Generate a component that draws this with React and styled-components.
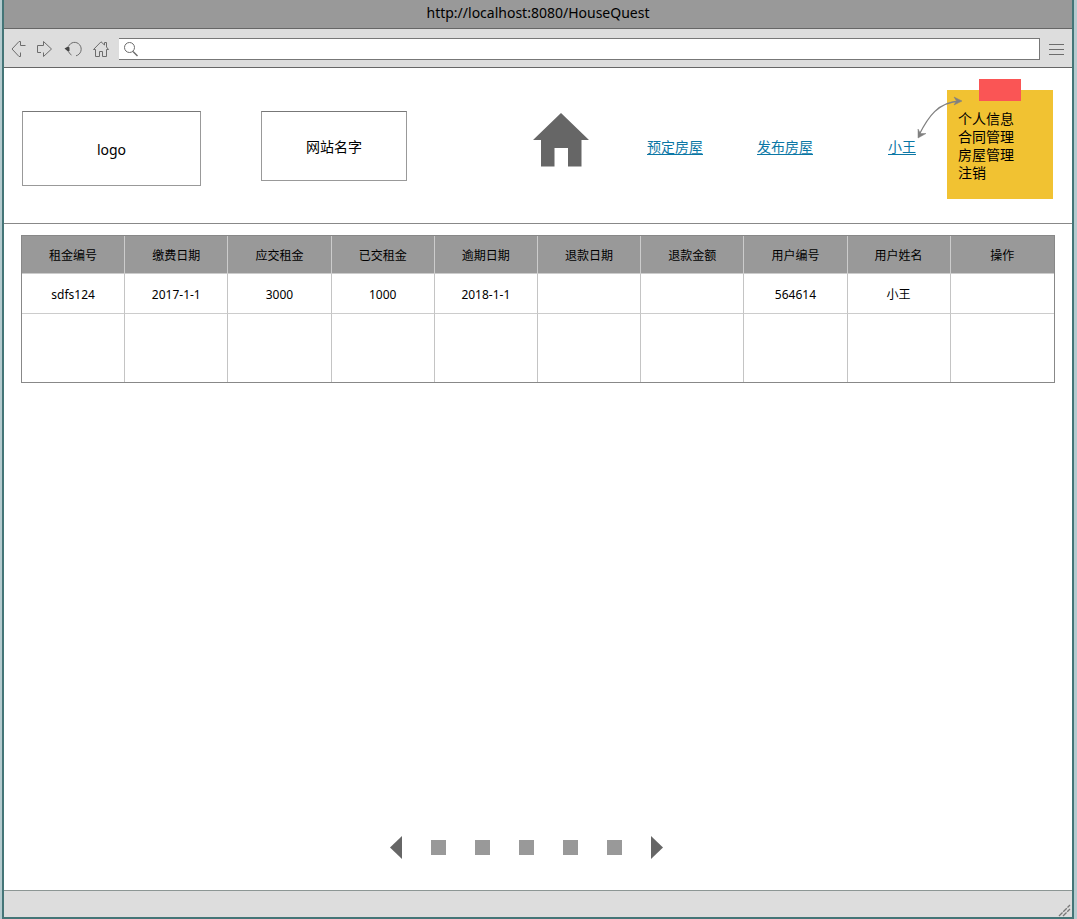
import React from "react";
import styled, { createGlobalStyle } from "styled-components";

const GlobalStyle = createGlobalStyle`
  *, *::before, *::after { box-sizing: border-box; }
  body {
    margin: 0;
    background: #b5cbcf;
    color: #000;
    font: 14px/18px "Noto Sans", "Noto Sans CJK SC", sans-serif;
  }
  button { border: 0; padding: 0; background: none; display: block; cursor: pointer; }
  svg { display: block; }
`;

const BrowserWindow = styled.div`
  display: flex;
  flex-direction: column;
  min-height: 100vh;
  margin: 0 3px 0 2px;
  border: solid #447577;
  border-width: 0 2px 2px;
  background: #fff;
`;

const TitleBar = styled.div`
  height: 29px;
  padding-top: 4px;
  text-align: center;
  background: #999;
  border-bottom: 1px solid #666;
`;

const Toolbar = styled.div`
  display: flex;
  align-items: center;
  height: 39px;
  padding: 2px 8px 0 6px;
  background: #ddd;
  border-bottom: 1px solid #666;
`;

const ToolbarButtons = styled.div`
  display: flex;
  gap: 9px;
  margin-right: 9px;
`;

const AddressBar = styled.label`
  display: flex;
  align-items: center;
  flex: 1;
  height: 22px;
  padding-left: 4px;
  background: #fff;
  border: solid #777;
  border-width: 1px 1px 1px 0;
`;

const AddressInput = styled.input`
  flex: 1;
  min-width: 0;
  margin-left: 6px;
  border: 0;
  outline: 0;
  font: inherit;
  background: transparent;
`;

const MenuButton = styled.button`
  margin-left: 9px;
`;

const Header = styled.header`
  display: flex;
  align-items: center;
  min-height: 156px;
  padding: 0 19px 0 18px;
  border-bottom: 1px solid #888;
`;

const Brand = styled.div`
  display: flex;
  align-items: flex-start;
  gap: 60px;
  padding-top: 6px;
`;

const Placeholder = styled.div`
  display: flex;
  align-items: center;
  justify-content: center;
  width: ${(p) => p.$width}px;
  height: ${(p) => p.$height}px;
  padding-top: 2px;
  border: 1px solid #999;
  border-top-color: #777;
`;

const Nav = styled.nav`
  display: flex;
  align-items: center;
  gap: 54px;
  margin-left: auto;
`;

const HomeLink = styled.a`
  width: 60px;
  padding-bottom: 12px;
`;

const TextLink = styled.a`
  padding-top: 2px;
  color: #0b77a5;
  white-space: nowrap;
  text-decoration: underline;
  text-underline-offset: 2px;
`;

const Account = styled.div`
  display: flex;
  align-items: center;
  gap: 31px;
  margin-left: 75px;
`;

const Note = styled.div`
  position: relative;
  display: flex;
  flex-direction: column;
  width: 106px;
  height: 109px;
  margin-bottom: 2px;
  padding: 20px 11px 0;
  background: #f1c232;
`;

const NoteLink = styled.a`
  color: #000;
  text-decoration: none;
`;

const Tape = styled.span`
  position: absolute;
  top: -11px;
  left: 32px;
  width: 42px;
  height: 22px;
  background: #fa5555;
`;

const Connector = styled.svg`
  position: absolute;
  top: 5px;
  left: -31px;
`;

const Content = styled.main`
  flex: 1;
  padding: 11px 17px;
`;

const Table = styled.table`
  width: 100%;
  table-layout: fixed;
  border-spacing: 0;
  border: 1px solid #888;
  font-size: 12px;
`;

const HeadCell = styled.th`
  height: 38px;
  padding: 2px 0 0;
  font-weight: 400;
  background: #999;
  border-right: 1px solid #ccc;
  border-bottom: 1px solid #ccc;
  &:last-child { border-right: 0; }
`;

const Cell = styled.td`
  height: ${(p) => (p.$last ? 68 : 40)}px;
  padding: 2px 0 0;
  text-align: center;
  border-right: 1px solid #c4c4c4;
  border-bottom: ${(p) => (p.$last ? "0" : "1px solid #ccc")};
  &:last-child { border-right: 0; }
`;

const Pagination = styled.nav`
  display: flex;
  align-items: center;
  justify-content: center;
  gap: 29px;
  padding: 0 23px 31px 0;
`;

const PageButton = styled.button`
  && { background: #999; }
  width: 15px;
  height: 15px;
`;

const StatusBar = styled.footer`
  display: flex;
  align-items: flex-end;
  justify-content: flex-end;
  height: 27px;
  background: #ddd;
  border-top: 1px solid #8c9694;
`;

const lineIcon = { fill: "none", stroke: "#6c6c6c", strokeWidth: 1 };

const BackIcon = () => (
  <svg width="17" height="18" viewBox="0 0 17 18" {...lineIcon}>
    <path d="M15.5 5.5H10.5V1.5H9L2 9L9 16.5H10.5V12.5" />
  </svg>
);

const ForwardIcon = () => (
  <svg width="17" height="18" viewBox="0 0 17 18" {...lineIcon}>
    <path d="M7.5 5.5V1.5L15.5 9L7.5 16.5V12.5M7.500 5.5H1.5V12.5H5" />
  </svg>
);

const ReloadIcon = () => (
  <svg width="21" height="18" viewBox="-2 0 21 18" {...lineIcon}>
    <path d="M4.500 6.500A6.600 6.800 0 1 1 12 15.8M4.500 11.500Q5.500 14 7.500 15" />
    <path d="M0.5 8.5L4 6.5L5.5 7.5V11L4 11.5Z" fill="#444" stroke="none" />
  </svg>
);

const HouseOutlineIcon = () => (
  <svg width="18" height="18" viewBox="0 0 18 18" {...lineIcon}>
    <path d="M3.5 9.5H1.5L9 1.8L12.5 5V2.5H14.5V7L16.5 9.5H14.5V16.5H10.5V11.5H7.5V16.5H3.5Z" />
  </svg>
);

const SearchIcon = () => (
  <svg width="16" height="16" viewBox="0 0 16 16" {...lineIcon}>
    <circle cx="6.5" cy="6.5" r="5" />
    <path d="M10 10.5L14.5 15" strokeWidth="1.4" />
  </svg>
);

const MenuIcon = () => (
  <svg width="15" height="13" viewBox="0 0 15 13" {...lineIcon}>
    <path d="M0 1.5H15M0 6.5H15M0 11.5H15" />
  </svg>
);

const HouseIcon = () => (
  <svg width="56" height="54" viewBox="0 0 56 54" fill="#666">
    <path d="M28 0L56 27H48.5V53.5H35V35H21.5V53.5H8V27H0Z" />
  </svg>
);

const COLUMNS = ["租金编号", "缴费日期", "应交租金", "已交租金", "逾期日期", "退款日期", "退款金额", "用户编号", "用户姓名", "操作"];
const ROWS = [
  ["sdfs124", "2017-1-1", "3000", "1000", "2018-1-1", "", "", "564614", "小王", ""],
  ["", "", "", "", "", "", "", "", "", ""],
];
const ACCOUNT_LINKS = ["个人信息", "合同管理", "房屋管理", "注销"];

export default function App() {
  return (
    <>
      <GlobalStyle />
      <BrowserWindow>
        <TitleBar>http://localhost:8080/HouseQuest</TitleBar>
        <Toolbar>
          <ToolbarButtons>
            <button aria-label="后退"><BackIcon /></button>
            <button aria-label="前进"><ForwardIcon /></button>
            <button aria-label="刷新"><ReloadIcon /></button>
            <button aria-label="主页"><HouseOutlineIcon /></button>
          </ToolbarButtons>
          <AddressBar>
            <SearchIcon />
            <AddressInput type="text" aria-label="地址" />
          </AddressBar>
          <MenuButton aria-label="菜单"><MenuIcon /></MenuButton>
        </Toolbar>
        <Header>
          <Brand>
            <Placeholder $width={179} $height={75}>logo</Placeholder>
            <Placeholder $width={146} $height={70}>网站名字</Placeholder>
          </Brand>
          <Nav>
            <HomeLink href="#home" aria-label="首页"><HouseIcon /></HomeLink>
            <TextLink href="#book">预定房屋</TextLink>
            <TextLink href="#publish">发布房屋</TextLink>
          </Nav>
          <Account>
            <TextLink href="#account">小王</TextLink>
            <Note>
              <Tape />
              <Connector width="48" height="44" viewBox="0 0 48 44" fill="none" stroke="#808080" strokeWidth="1.3">
                <path d="M3 40C12 22 22 7 44 6" />
                <path d="M38 2L46 6L38 10L40.5 6Z" fill="#808080" strokeWidth="0.5" />
                <path d="M2 34L2 43L10 38.500L4.500 38.500Z" fill="#808080" strokeWidth="0.5" />
              </Connector>
              {ACCOUNT_LINKS.map((label) => (
                <NoteLink key={label} href="#account">{label}</NoteLink>
              ))}
            </Note>
          </Account>
        </Header>
        <Content>
          <Table>
            <thead>
              <tr>{COLUMNS.map((c) => <HeadCell key={c} scope="col">{c}</HeadCell>)}</tr>
            </thead>
            <tbody>
              {ROWS.map((row, r) => (
                <tr key={r}>
                  {row.map((value, c) => <Cell key={c} $last={r === ROWS.length - 1}>{value}</Cell>)}
                </tr>
              ))}
            </tbody>
          </Table>
        </Content>
        <Pagination aria-label="分页">
          <button aria-label="上一页">
            <svg width="12" height="23" viewBox="0 0 12 23" fill="#666"><path d="M12 0V23L0 11.500Z" /></svg>
          </button>
          {[1, 2, 3, 4, 5].map((n) => <PageButton key={n} aria-label={`第${n}页`} />)}
          <button aria-label="下一页">
            <svg width="12" height="23" viewBox="0 0 12 23" fill="#666"><path d="M0 0V23L12 11.500Z" /></svg>
          </button>
        </Pagination>
        <StatusBar>
          <svg width="14" height="14" viewBox="0 0 14 14" fill="none" stroke="#777" strokeWidth="1.3" strokeDasharray="5 1">
            <path d="M1 13L12 2M5 13L12 6" />
          </svg>
        </StatusBar>
      </BrowserWindow>
    </>
  );
}
